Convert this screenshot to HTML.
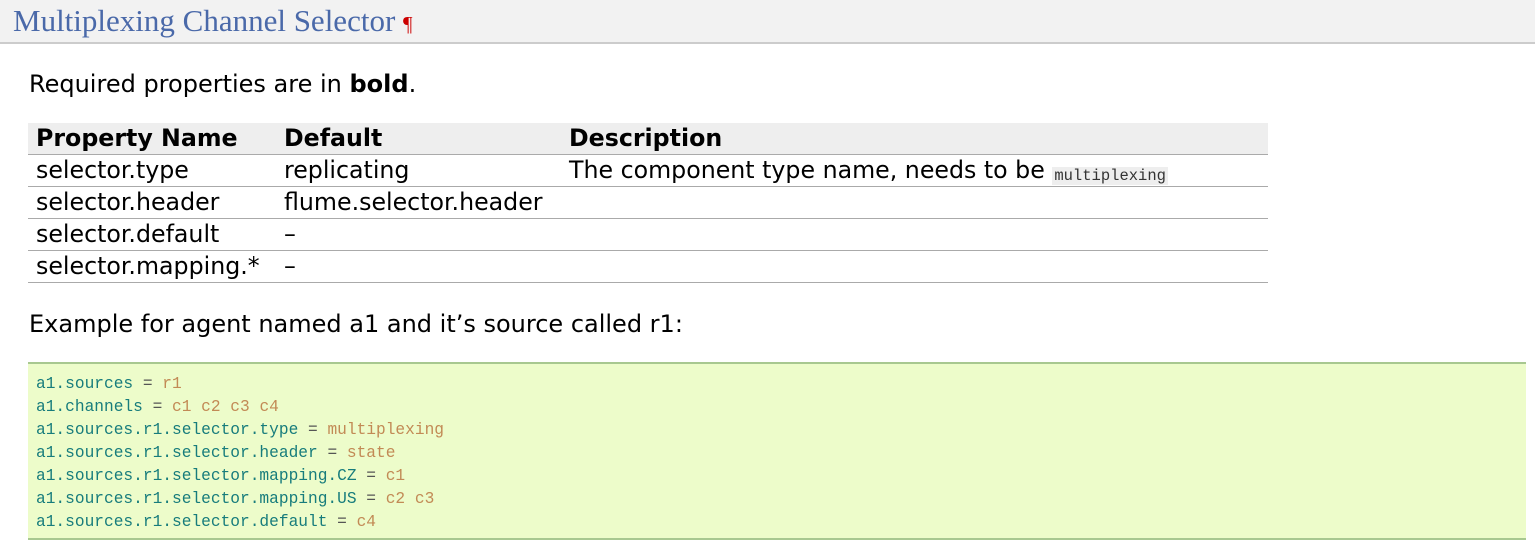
<!DOCTYPE html>
<html><head><style>
body{margin:0;background:#fff;width:1535px;height:544px;overflow:hidden;font-family:"DejaVu Sans","Liberation Sans",sans-serif;color:#000}
.h{position:absolute;left:0;top:0;width:1535px;height:42px;background:#f2f2f2;border-bottom:2px solid #ccc}
.h span{position:absolute;left:13px;top:3px;font-family:"Liberation Serif",serif;font-size:31px;color:#4a69a9;white-space:nowrap}
.h b{font-weight:normal;color:#c00;font-size:21px}
.p{position:absolute;left:29px;font-size:24px;white-space:nowrap;line-height:30px}
table{position:absolute;left:28px;top:123px;width:1240px;border-collapse:collapse;font-size:23.7px}
td,th{text-align:left;padding:0 0 0 8px;height:31px;border-bottom:1px solid #aaa;white-space:nowrap;line-height:31px;overflow:hidden}
th{background:#eee;font-weight:bold;height:31px}
code{font-family:"Liberation Mono",monospace;font-size:15.5px;background:#eee;color:#333;padding:0 2px;line-height:18px;display:inline-block;vertical-align:-2px}
pre{position:absolute;left:28px;top:362px;width:1498px;height:178px;margin:0;background:#edfcca;border-top:2px solid #a8c890;border-bottom:2px solid #a8c890;font-family:"Liberation Mono",monospace;font-size:16.2px;line-height:23px;padding:9px 0 0 8px;box-sizing:border-box;color:#177c7c}
.v{color:#c28a55}.e{color:#555}
</style></head><body>
<div class="h"><span>Multiplexing Channel Selector <b>¶</b></span></div>
<div class="p" style="top:69px">Required properties are in <b>bold</b>.</div>
<table>
<tr><th style="width:240px">Property Name</th><th style="width:277px">Default</th><th>Description</th></tr>
<tr><td>selector.type</td><td>replicating</td><td>The component type name, needs to be <code>multiplexing</code></td></tr>
<tr><td>selector.header</td><td>flume.selector.header</td><td></td></tr>
<tr><td>selector.default</td><td>–</td><td></td></tr>
<tr><td>selector.mapping.*</td><td>–</td><td></td></tr>
</table>
<div class="p" style="top:309px">Example for agent named a1 and it’s source called r1:</div>
<pre>a1.sources <span class="e">=</span> <span class="v">r1</span>
a1.channels <span class="e">=</span> <span class="v">c1 c2 c3 c4</span>
a1.sources.r1.selector.type <span class="e">=</span> <span class="v">multiplexing</span>
a1.sources.r1.selector.header <span class="e">=</span> <span class="v">state</span>
a1.sources.r1.selector.mapping.CZ <span class="e">=</span> <span class="v">c1</span>
a1.sources.r1.selector.mapping.US <span class="e">=</span> <span class="v">c2 c3</span>
a1.sources.r1.selector.default <span class="e">=</span> <span class="v">c4</span></pre>
</body></html>
